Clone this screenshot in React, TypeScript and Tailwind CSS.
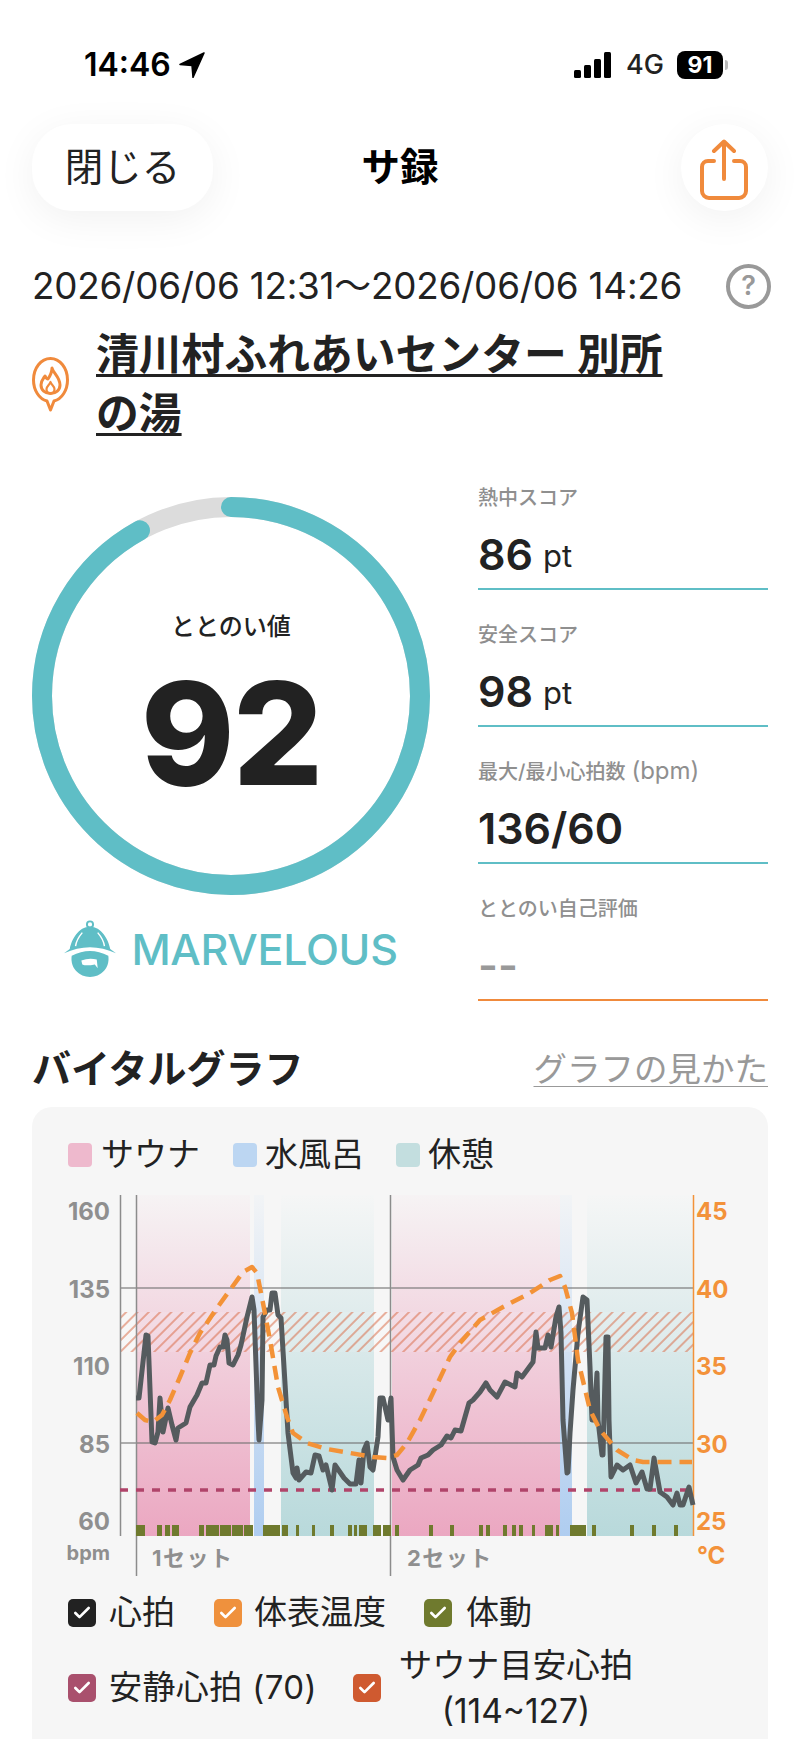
import { Check } from 'lucide-react'

const hrLine =
  '136,1398 139,1398 141,1380 146,1335 148,1336 152,1442 155,1443 158,1432 160,1398 163,1432 168,1408 172,1425 176,1440 178,1428 186,1423 190,1407 197,1395 202,1383 206,1383 210,1365 214,1365 216,1356 220,1347 223,1347 225,1335 227,1340 229,1363 233,1365 238,1355 241,1345 247,1317 252,1297 254,1310 258,1420 259,1440 262,1400 263,1317 267,1310 270,1310 272,1293 275,1293 278,1315 281,1318 284,1367 288,1433 293,1473 296,1478 297,1468 299,1480 306,1472 311,1473 315,1455 319,1456 323,1470 326,1465 332,1490 335,1465 344,1478 350,1484 356,1484 359,1460 361,1483 364,1450 367,1443 370,1467 373,1470 378,1437 380,1398 383,1398 388,1420 391,1398 393,1457 397,1470 403,1480 410,1470 418,1465 421,1458 428,1455 433,1450 441,1445 447,1436 451,1438 455,1430 461,1431 465,1417 469,1403 473,1400 480,1392 486,1383 490,1390 497,1397 505,1382 515,1387 517,1373 522,1377 533,1362 536,1332 538,1348 545,1348 548,1335 551,1347 556,1317 559,1307 561,1333 563,1420 567,1473 568,1472 570,1433 573,1390 578,1333 583,1297 587,1300 590,1367 592,1420 594,1420 597,1373 598,1420 602,1455 603,1455 606,1337 608,1337 609,1420 611,1477 617,1465 623,1470 630,1465 636,1483 642,1472 647,1489 650,1489 654,1458 660,1492 667,1497 673,1505 677,1493 680,1505 683,1505 689,1487 693,1505'

const tempLine =
  '137,1413 145,1420 153,1422 162,1415 170,1400 180,1377 190,1353 200,1333 217,1308 230,1290 243,1272 252,1267 257,1273 263,1303 270,1340 278,1387 287,1417 293,1433 307,1443 327,1449 350,1453 373,1457 387,1458 397,1455 407,1443 420,1420 433,1393 450,1357 460,1343 480,1320 503,1307 530,1293 550,1280 560,1276 565,1287 572,1313 578,1360 590,1410 600,1430 617,1450 633,1460 643,1462 692,1462'

// movement ticks along the bottom of the graph, [from, to]
const motion = [
  [136, 145], [157, 162], [165, 170], [172, 179], [199, 204], [206, 219], [220, 231], [232, 243], [244, 253],
  [263, 280], [282, 288], [296, 299], [312, 315], [330, 334], [348, 352], [354, 357], [359, 367], [373, 381],
  [383, 391], [395, 399], [429, 433], [450, 454], [479, 483], [486, 490], [503, 507], [512, 516], [519, 523],
  [532, 535], [545, 553], [556, 559], [570, 586], [592, 596], [630, 634], [652, 656], [674, 678]
]

function StatusBar() {
  return (
    <div className="flex h-[124px] items-start justify-between pl-[84px] pr-[72px] pt-[44px]">
      <div className="flex h-[42px] items-center gap-[8px] text-[32px] font-semibold text-black">
        <span>14:46</span>
        <svg width="26" height="26" viewBox="0 0 26 26">
          <path d="M25 1 L1 12.5 L13 13.5 L14 25.5 Z" fill="#000" stroke="#000" strokeWidth="1.5" strokeLinejoin="round" />
        </svg>
      </div>
      <div className="flex h-[42px] items-center">
        <svg width="38" height="26" viewBox="0 0 38 26">
          <rect x="0" y="18" width="7" height="8" rx="1.5" fill="#000" />
          <rect x="10" y="13" width="7" height="13" rx="1.5" fill="#000" />
          <rect x="20" y="7" width="7" height="19" rx="1.5" fill="#000" />
          <rect x="30" y="0" width="7" height="26" rx="1.5" fill="#000" />
        </svg>
        <span className="ml-[14px] text-[27px] font-medium text-[#222]">4G</span>
        <div className="ml-[13px] flex h-[28px] w-[46px] items-center justify-center rounded-[8px] bg-black text-[23px] font-bold text-white">
          91
        </div>
        <div className="ml-[2px] h-[10px] w-[3px] rounded-r-full bg-[#bbb]" />
      </div>
    </div>
  )
}

function Header() {
  return (
    <div className="mx-[32px] grid h-[87px] grid-cols-3 items-center">
      <div className="flex h-[87px] w-[181px] items-center justify-center rounded-[40px] bg-white text-[38.5px] text-[#222] shadow-[0_8px_40px_rgba(0,0,0,0.06)]">
        閉じる
      </div>
      <div className="text-center text-[38.5px] font-bold text-black">サ録</div>
      <div className="flex justify-end">
        <div className="flex h-[87px] w-[87px] items-center justify-center rounded-full bg-white pt-[4px] shadow-[0_8px_40px_rgba(0,0,0,0.06)]">
          <svg width="50" height="62" viewBox="0 0 50 62" fill="none" stroke="#f08a3c" strokeWidth="4" strokeLinecap="round" strokeLinejoin="round">
            <path d="M25 40 V3 M15 12 L25 2.5 L35 12" />
            <path d="M15 22 H9 a6 6 0 0 0 -6 6 V52 a7 7 0 0 0 7 7 H40 a7 7 0 0 0 7 -7 V28 a6 6 0 0 0 -6 -6 H35" />
          </svg>
        </div>
      </div>
    </div>
  )
}

function PinIcon() {
  return (
    <svg width="37" height="55" viewBox="0 0 37 55" fill="none" stroke="#f08a3c" strokeWidth="3" strokeLinejoin="round" strokeLinecap="round" className="shrink-0">
      <path d="M15 44 C7 42 1.5 33 1.5 23 C1.5 11 9 1.5 18.5 1.5 C28 1.5 35.5 11 35.5 23 C35.5 33 30 42 22 44 L18.5 53 Z" />
      <path d="M20 11 C21 16 28 20 28 28 C28 33 24 36.5 18.5 36.5 C13 36.5 9 33 9 28 C9 24 11 22 13 19 C14 21 15 22 16 22 C18 19 20 15 20 11 Z" />
      <path d="M18.5 25 C19.5 28 22.5 29 22.5 32 C22.5 35 20.5 36.5 18.5 36.5 C16.5 36.5 14.5 35 14.5 32 C14.5 29 17.5 28 18.5 25 Z" strokeWidth="2.2" />
    </svg>
  )
}

function HelmetIcon() {
  return (
    <svg width="52" height="60" viewBox="-3 0 54 60">
      <circle cx="24" cy="4.5" r="3.2" fill="none" stroke="#5fbec6" strokeWidth="2" />
      <path d="M24 7 C36 7 43 20 45 30 L51 34.5 Q24 22 -3 34.5 L3 30 C5 20 12 7 24 7 Z" fill="#5fbec6" />
      <path d="M16 13 Q10 20 9 27 M32 13 Q38 20 39 27" fill="none" stroke="#fff" strokeWidth="1.5" />
      <path d="M5 37 Q24 27 43 37 C45 50 35 59 24 59 C13 59 3 50 5 37 Z" fill="#5fbec6" />
      <path d="M15 42 Q23 39 31 41 L32 50 L29 46 Q20 48 16 46 Z" fill="#fff" />
    </svg>
  )
}

function ScoreRing() {
  return (
    <div className="relative h-[398px] w-[398px]">
      <svg width="398" height="398" viewBox="0 0 398 398" fill="none">
        <circle cx="199" cy="199" r="189" stroke="#dcdcdc" strokeWidth="20" />
        <circle
          cx="199"
          cy="199"
          r="189"
          stroke="#5fbec6"
          strokeWidth="20"
          strokeLinecap="round"
          pathLength={100}
          strokeDasharray="92 100"
          transform="rotate(-90 199 199)"
        />
      </svg>
      <div className="absolute inset-0 flex flex-col items-center">
        <span className="mt-[114px] text-[24px] font-medium leading-[32px] text-[#222]">ととのい値</span>
        <span className="mt-[5px] text-[142px] font-extrabold leading-[170px] tracking-[-2px] text-[#222]">92</span>
      </div>
    </div>
  )
}

function ScoreRow({
  label,
  note,
  value,
  unit,
  orange
}: {
  label: string
  note?: string
  value: string
  unit?: string
  orange?: boolean
}) {
  return (
    <div className={`mb-[31px] border-b-2 pb-[6px] last:mb-0 ${orange ? 'border-[#f08a3c]' : 'border-[#5fbec6]'}`}>
      <div className="h-[28px] whitespace-nowrap text-[20px] font-medium leading-[28px] text-[#8f8f8f]">
        {label}
        {note && <span className="ml-[6px] text-[24px] leading-[20px] font-normal">{note}</span>}
      </div>
      <div className={`mt-[14px] flex h-[56px] items-center text-[43px] font-semibold ${orange ? 'text-[#999]' : 'text-[#222]'}`}>
        {value}
        {unit && <span className="ml-[10px] mt-[4px] text-[31px] font-normal">{unit}</span>}
      </div>
    </div>
  )
}

function VitalChart() {
  const axis = [
    { bpm: '160', temp: '45', y: 1211 },
    { bpm: '135', temp: '40', y: 1289 },
    { bpm: '110', temp: '35', y: 1366 },
    { bpm: '85', temp: '30', y: 1444 },
    { bpm: '60', temp: '25', y: 1521 }
  ]

  return (
    <svg width="736" height="405" viewBox="32 1185 736 405" className="mt-[10px] block" fontFamily="Inter, 'Noto Sans CJK JP', sans-serif">
      <defs>
        <linearGradient id="sauna" gradientUnits="userSpaceOnUse" x1="0" y1="1195" x2="0" y2="1536">
          <stop offset="0" stopColor="#f6f3f4" />
          <stop offset="1" stopColor="#eba7c1" />
        </linearGradient>
        <linearGradient id="cold" gradientUnits="userSpaceOnUse" x1="0" y1="1195" x2="0" y2="1536">
          <stop offset="0" stopColor="#f2f4f6" />
          <stop offset="1" stopColor="#afcdf0" />
        </linearGradient>
        <linearGradient id="rest" gradientUnits="userSpaceOnUse" x1="0" y1="1195" x2="0" y2="1536">
          <stop offset="0" stopColor="#f5f6f6" />
          <stop offset="1" stopColor="#b8d9db" />
        </linearGradient>
        <pattern id="hatch" width="8" height="8" patternUnits="userSpaceOnUse" patternTransform="rotate(45)">
          <line x1="1" y1="0" x2="1" y2="8" stroke="#d9643c" strokeOpacity="0.7" strokeWidth="1.4" />
        </pattern>
      </defs>

      {/* zones */}
      <rect x="136" y="1195" width="114" height="341" fill="url(#sauna)" />
      <rect x="254" y="1195" width="10" height="341" fill="url(#cold)" />
      <rect x="281" y="1195" width="93" height="341" fill="url(#rest)" />
      <rect x="392" y="1195" width="168" height="341" fill="url(#sauna)" />
      <rect x="560" y="1195" width="12" height="341" fill="url(#cold)" />
      <rect x="587" y="1195" width="106" height="341" fill="url(#rest)" />

      {/* sauna target heart rate band */}
      <rect x="120" y="1312" width="573" height="40" fill="#fff" fillOpacity="0.12" />
      <rect x="120" y="1312" width="573" height="40" fill="url(#hatch)" />

      {/* grid */}
      <line x1="120" y1="1288" x2="693" y2="1288" stroke="#6f6f6f" strokeOpacity="0.55" strokeWidth="2" />
      <line x1="120" y1="1443" x2="693" y2="1443" stroke="#6f6f6f" strokeOpacity="0.55" strokeWidth="2" />
      <line x1="120.5" y1="1195" x2="120.5" y2="1536" stroke="#8c8c8c" strokeWidth="1.5" />
      <line x1="136.5" y1="1195" x2="136.5" y2="1576" stroke="#8c8c8c" strokeWidth="1.5" />
      <line x1="390.5" y1="1195" x2="390.5" y2="1576" stroke="#8c8c8c" strokeWidth="1.5" />
      <line x1="693.5" y1="1195" x2="693.5" y2="1536" stroke="#f3923a" strokeWidth="1.5" />

      <line x1="120" y1="1490" x2="693" y2="1490" stroke="#b0446a" strokeWidth="3.5" strokeDasharray="8 8" />

      {motion.map(([from, to]) => (
        <rect key={from} x={from} y="1525" width={to - from} height="11" fill="#6f7a2e" />
      ))}

      <polyline points={hrLine} fill="none" stroke="#555b5e" strokeWidth="5" strokeLinejoin="round" />
      <polyline points={tempLine} fill="none" stroke="#f39237" strokeWidth="4.5" strokeDasharray="14 8" strokeLinejoin="round" />

      {axis.map(a => (
        <g key={a.bpm} fontSize="24" fontWeight="700">
          <text x="110" y={a.y + 9} textAnchor="end" fill="#8f8f8f">{a.bpm}</text>
          <text x="696" y={a.y + 9} fill="#f3923a">{a.temp}</text>
        </g>
      ))}
      <text x="110" y="1560" textAnchor="end" fontSize="20" fontWeight="700" fill="#8f8f8f">bpm</text>
      <text x="697" y="1564" fontSize="24" fontWeight="700" fill="#f3923a">°C</text>
      <text x="152" y="1566" fontSize="22" fontWeight="700" letterSpacing="1.5" fill="#8f8f8f">1セット</text>
      <text x="407" y="1566" fontSize="22" fontWeight="700" letterSpacing="1.5" fill="#8f8f8f">2セット</text>
    </svg>
  )
}

function CheckBox({ color }: { color: string }) {
  return (
    <span className={`flex h-[28px] w-[28px] shrink-0 items-center justify-center rounded-[5px] ${color}`}>
      <Check size={20} strokeWidth={3.2} color="#fff" />
    </span>
  )
}

export default function App() {
  return (
    <div className="flex h-[1739px] w-[800px] flex-col overflow-hidden bg-white font-['Inter','Noto_Sans_CJK_JP',sans-serif] text-[#222]">
      <StatusBar />
      <Header />

      {/* Date */}
      <div className="ml-[32px] mr-[28px] mt-[53px] flex h-[44px] items-center justify-between">
        <span className="text-[36.8px] tracking-[-0.2px] whitespace-nowrap">2026/06/06 12:31～2026/06/06 14:26</span>
        <span className="mr-[1px] flex h-[45px] w-[45px] items-center justify-center rounded-full border-[4px] border-[#999] text-[27px] font-semibold text-[#999]">?</span>
      </div>

      {/* Facility */}
      <div className="mx-[32px] mt-[17px] flex items-center gap-[27px]">
        <PinIcon />
        <div className="text-[42.8px] font-bold leading-[59px] underline decoration-[3px] underline-offset-[4px]">
          清川村ふれあいセンター 別所
          <br />
          の湯
        </div>
      </div>

      {/* Scores */}
      <div className="mt-[41px] flex pl-[32px]">
        <div className="w-[398px] pt-[13px]">
          <ScoreRing />
          <div className="mt-[24px] flex h-[60px] items-center justify-center gap-[15px]">
            <HelmetIcon />
            <span className="text-[43px] font-medium tracking-[-0.3px] text-[#5fbec6]">MARVELOUS</span>
          </div>
        </div>
        <div className="ml-[48px] w-[290px]">
          <ScoreRow label="熱中スコア" value="86" unit="pt" />
          <ScoreRow label="安全スコア" value="98" unit="pt" />
          <ScoreRow label="最大/最小心拍数" note="(bpm)" value="136/60" />
          <ScoreRow label="ととのい自己評価" value="--" orange />
        </div>
      </div>

      {/* Vital graph */}
      <div className="mx-[32px] mt-[43px] flex h-[50px] items-center justify-between">
        <h2 className="text-[39px] font-bold">バイタルグラフ</h2>
        <span className="text-[33.5px] text-[#999] underline decoration-1 underline-offset-[5px]">グラフの見かた</span>
      </div>

      <div className="mx-[32px] mt-[13px] flex-1 rounded-t-[20px] bg-[#f6f6f6] pt-[28px]">
        <div className="flex h-[40px] items-center pl-[36px] text-[33px]">
          <span className="h-[24px] w-[24px] rounded-[4px] bg-[#eeb9cd]" />
          <span className="ml-[9px]">サウナ</span>
          <span className="ml-[33px] h-[24px] w-[24px] rounded-[4px] bg-[#bcd6f2]" />
          <span className="ml-[8px]">水風呂</span>
          <span className="ml-[32px] h-[24px] w-[24px] rounded-[4px] bg-[#c3dedf]" />
          <span className="ml-[8px]">休憩</span>
        </div>

        <VitalChart />

        <div className="flex h-[46px] items-center pl-[36px] text-[33px]">
          <CheckBox color="bg-[#222222]" />
          <span className="ml-[13px]">心拍</span>
          <span className="ml-[39px]"><CheckBox color="bg-[#ef913d]" /></span>
          <span className="ml-[12px]">体表温度</span>
          <span className="ml-[38px]"><CheckBox color="bg-[#6f7a2e]" /></span>
          <span className="ml-[14px]">体動</span>
        </div>
        <div className="mt-[6px] flex items-center pl-[36px] text-[33px]">
          <CheckBox color="bg-[#a9506d]" />
          <span className="ml-[13px] tracking-[0.4px]">安静心拍 (70)</span>
          <span className="ml-[36px]"><CheckBox color="bg-[#cf5a30]" /></span>
          <span className="ml-[17px] w-[236px] text-center text-[33.5px] leading-[46px]">
            サウナ目安心拍
            <br />
            (114~127)
          </span>
        </div>
      </div>
    </div>
  )
}
